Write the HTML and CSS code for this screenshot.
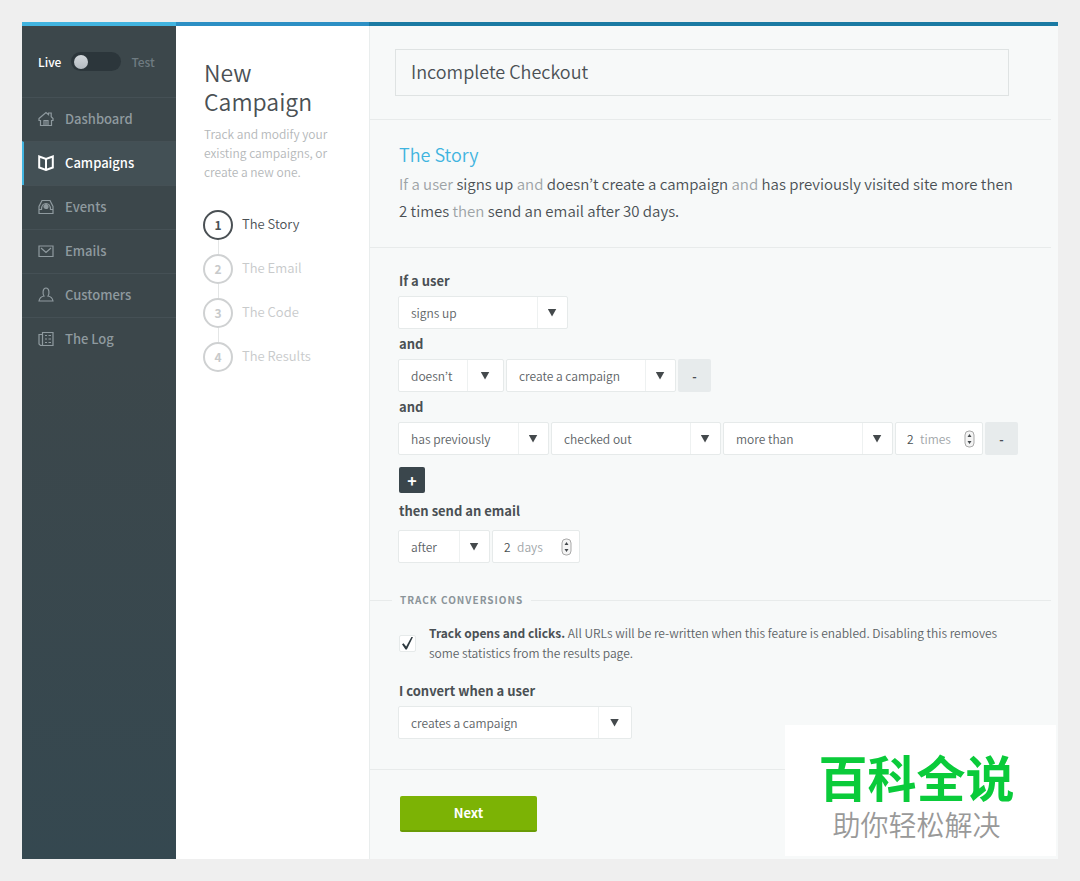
FILE: index.html
```html
<!DOCTYPE html>
<html lang="en">
<head>
    <meta charset="UTF-8">
    <meta name="viewport" content="width=device-width, initial-scale=1.0">
    <title>New Campaign</title>
    <link rel="stylesheet" href="styles.css">
</head>
<body>
    <div class="app">
        <div class="topbar"></div>

        <aside class="sidebar">
            <label class="mode">
                <span class="mode-on">Live</span>
                <input type="checkbox" class="switch" name="test_mode">
                <span class="mode-off">Test</span>
            </label>
            <nav class="nav">
                <a href="#dashboard" class="nav-link">
                    <svg class="icon" viewBox="0 0 16 16"><path d="M1 7.500L8 1.500L10.500 3.600V2H13.200V5.800L15 7.500V9.500H13.500V14.500H2.500V9.500H1ZM6 14.500V9.500H10V14.500M8 9.500V14.500"/></svg>
                    Dashboard
                </a>
                <a href="#campaigns" class="nav-link active">
                    <svg class="icon" viewBox="0 0 16 16"><path d="M1.200 1.500L8 4L14.800 1.500V12.500L8 15L1.200 12.500ZM8 4V15"/></svg>
                    Campaigns
                </a>
                <a href="#events" class="nav-link">
                    <svg class="icon" viewBox="0 0 16 16"><path d="M1 14.500V7.500L4 1.500H12L15 7.500V14.500ZM1 10.500H3.500C3.500 2.500 12.500 2.500 12.500 10.500H15"/><circle cx="8" cy="7.500" r="2" fill="currentColor"/></svg>
                    Events
                </a>
                <a href="#emails" class="nav-link">
                    <svg class="icon" viewBox="0 0 16 16"><path d="M1 3H15V13.500H1ZM3 5L8 9.500L13 5"/></svg>
                    Emails
                </a>
                <a href="#customers" class="nav-link">
                    <svg class="icon" viewBox="0 0 16 16"><path d="M6 9C4.500 7 4.500 1 8 1S11.500 7 10 9C13 9.500 14.500 11 15 14H1C1.500 11 3 9.500 6 9Z"/></svg>
                    Customers
                </a>
                <a href="#log" class="nav-link">
                    <svg class="icon" viewBox="0 0 16 16"><path d="M4.500 1.500H15V14.500H2.500L1 13V3.500H4.500ZM4.500 1.500V14.500M7 4.500H9M10.500 4.500H13M7 8H9M10.500 8H13M7 11.500H9M10.500 11.500H13"/></svg>
                    The Log
                </a>
            </nav>
        </aside>

        <section class="panel">
            <h1>New Campaign</h1>
            <p class="intro">Track and modify your existing campaigns, or create a new one.</p>
            <ol class="steps">
                <li class="step current"><span class="num">1</span>The Story</li>
                <li class="step"><span class="num">2</span>The Email</li>
                <li class="step"><span class="num">3</span>The Code</li>
                <li class="step"><span class="num">4</span>The Results</li>
            </ol>
        </section>

        <main class="main">
            <form action="#">
                <div class="name-row">
                    <input type="text" class="name-input" name="name" value="Incomplete Checkout" aria-label="Campaign name">
                </div>

                <section class="story">
                    <h2>The Story</h2>
                    <p>If a user <b>signs up</b> and <b>doesn’t create a campaign</b> and <b>has previously visited site more then 2 times</b> then <b>send an email after 30 days.</b></p>
                </section>

                <section class="rules">
                    <label class="rule-label" for="event">If a user</label>
                    <div class="row">
                        <span class="select medium"><select id="event"><option>signs up</option></select></span>
                    </div>

                    <label class="rule-label" for="does">and</label>
                    <div class="row">
                        <span class="select small"><select id="does"><option>doesn’t</option></select></span>
                        <span class="select medium"><select aria-label="Action"><option>create a campaign</option></select></span>
                        <button type="button" class="remove" aria-label="Remove condition">-</button>
                    </div>

                    <label class="rule-label" for="has">and</label>
                    <div class="row">
                        <span class="select history"><select id="has"><option>has previously</option></select></span>
                        <span class="select medium"><select aria-label="Action"><option>checked out</option></select></span>
                        <span class="select medium"><select aria-label="Comparison"><option>more than</option></select></span>
                        <label class="number">
                            <input type="number" name="times" value="2">
                            <span>times</span>
                            <svg class="stepper" viewBox="0 0 11 18"><rect x="1" y="1" width="9" height="16" rx="4"/><path d="M3.500 7L5.500 4L7.500 7ZM3.500 11L5.500 14L7.500 11Z"/></svg>
                        </label>
                        <button type="button" class="remove" aria-label="Remove condition">-</button>
                    </div>

                    <button type="button" class="add" aria-label="Add condition">+</button>

                    <label class="rule-label" for="when">then send an email</label>
                    <div class="row send-row">
                        <span class="select when"><select id="when"><option>after</option></select></span>
                        <label class="number">
                            <input type="number" name="days" value="2">
                            <span>days</span>
                            <svg class="stepper" viewBox="0 0 11 18"><rect x="1" y="1" width="9" height="16" rx="4"/><path d="M3.500 7L5.500 4L7.500 7ZM3.500 11L5.500 14L7.500 11Z"/></svg>
                        </label>
                    </div>
                </section>

                <section class="track">
                    <h3>Track Conversions</h3>
                    <div class="track-body">
                        <label class="check">
                            <input type="checkbox" name="track" checked>
                            <span><b>Track opens and clicks.</b> All URLs will be re-written when this feature is enabled. Disabling this removes some statistics from the results page.</span>
                        </label>
                        <label class="rule-label" for="convert">I convert when a user</label>
                        <div class="row">
                            <span class="select large"><select id="convert"><option>creates a campaign</option></select></span>
                        </div>
                    </div>
                </section>

                <div class="actions">
                    <button type="submit" class="next">Next</button>
                </div>
            </form>
        </main>

        <div class="badge" lang="zh">
            <strong>百科全说</strong>
            <span>助你轻松解决</span>
        </div>
    </div>
</body>
</html>
```
FILE: styles.css
```css
* {
    box-sizing: border-box;
}
body {
    margin: 0;
    padding: 22px;
    background: #efefef;
    color: #4a5054;
    font-family: "Noto Sans CJK KR", "Open Sans", sans-serif;
    font-size: 12px;
    font-weight: 350;
}
h1, h2, h3, p, ol {
    margin: 0;
    padding: 0;
    font-weight: 350;
}
input, select, button {
    margin: 0;
    font: inherit;
    color: inherit;
}
.app {
    position: relative;
    display: grid;
    grid-template-columns: 154px 194px 1fr;
    grid-template-rows: 4px 1fr;
    min-height: calc(100vh - 44px);
    background: #f7f9f9;
}
.topbar {
    grid-column: 1 / -1;
    background: linear-gradient(90deg, #41b4e0 154px, #2c8fc4 154px, #2c8fc4 347px, #1a7aa3 347px);
}

/* sidebar */
.sidebar {
    background: linear-gradient(#3c474b 40%, #354850);
}
.mode {
    display: flex;
    align-items: center;
    gap: 10px;
    height: 71px;
    padding-left: 16px;
    font-weight: 500;
}
.mode-on {
    color: #fff;
}
.mode-off {
    color: #6f7b81;
}
.switch {
    appearance: none;
    display: flex;
    align-items: center;
    width: 50px;
    height: 19px;
    padding: 0 3px;
    border-radius: 10px;
    background: #2c363b;
}
.switch::before {
    content: "";
    width: 14px;
    height: 14px;
    border-radius: 50%;
    background: linear-gradient(#d3d8dc, #b4bbc1);
}
.switch:checked {
    justify-content: flex-end;
}
.nav-link {
    display: flex;
    align-items: center;
    gap: 11px;
    height: 44px;
    padding: 0 0 2px 16px;
    border-top: 1px solid #455055;
    color: #8f9a9f;
    font-size: 13px;
    font-weight: 500;
    text-decoration: none;
}
.nav-link.active {
    padding-left: 14px;
    border-left: 2px solid #41b4e0;
    background: #435055;
    color: #fff;
}
.icon {
    width: 16px;
    height: 16px;
    fill: none;
    stroke: currentColor;
    stroke-width: 1.2;
}
.active .icon {
    stroke-width: 2;
}

/* steps panel */
.panel {
    padding: 32px 28px;
    background: #fff;
    border-right: 1px solid #e9eded;
}
.panel h1 {
    font-size: 23px;
    line-height: 29px;
}
.intro {
    margin-top: 8px;
    color: #b4b7b9;
    line-height: 19px;
}
.steps {
    margin: 29px 0 0 -1px;
    list-style: none;
}
.step {
    display: grid;
    grid-template-columns: 30px 1fr;
    column-gap: 9px;
    color: #c8cacb;
    font-size: 13px;
    line-height: 28px;
}
.step:not(:last-child)::after {
    content: "";
    justify-self: center;
    width: 1px;
    height: 14px;
    background: #e4e6e6;
}
.num {
    height: 30px;
    border: 2px solid #cfd1d2;
    border-radius: 50%;
    font-size: 12px;
    font-weight: 700;
    line-height: 26px;
    text-align: center;
}
.step.current {
    color: #4a5054;
}
.current .num {
    border-color: #4a5054;
}

/* form */
.name-row, .story, .rules, .track {
    margin-right: 7px;
}
.name-row {
    padding: 23px 42px 23px 25px;
    border-bottom: 1px solid #e8ebeb;
}
.name-input {
    display: block;
    width: 100%;
    height: 47px;
    padding: 0 15px 4px;
    border: 1px solid #dfe3e3;
    background: none;
    font-size: 18px;
}
.story {
    padding: 20px 36px 23px 29px;
    border-bottom: 1px solid #e8ebeb;
    color: #9da3a6;
}
.story h2 {
    margin-bottom: 2px;
    color: #3fb4df;
    font-size: 18px;
    line-height: 28px;
}
.story p {
    font-size: 15px;
    line-height: 27px;
}
.story b {
    color: #4a5054;
    font-weight: 350;
}
.rules {
    padding: 18px 0 27px 29px;
}
.rule-label {
    display: block;
    font-size: 13px;
    font-weight: 700;
    line-height: 30px;
}
.row {
    display: flex;
    gap: 2px;
    margin-left: -1px;
}
.select {
    display: grid;
    grid-template-columns: 1fr 30px;
    height: 33px;
    border: 1px solid #e6eaea;
    border-radius: 2px;
    background: #fff;
}
.select select {
    grid-area: 1 / 1 / 2 / 3;
    appearance: none;
    padding: 0 12px;
    border: none;
    background: none;
    color: #5c6265;
}
.select::before {
    content: "";
    grid-area: 1 / 2;
    border-left: 1px solid #eef1f1;
    pointer-events: none;
}
.select::after {
    content: "";
    grid-area: 1 / 2;
    place-self: center;
    width: 9px;
    height: 8px;
    background: #44494c;
    clip-path: polygon(0 0, 100% 0, 50% 100%);
    pointer-events: none;
}
.small {
    width: 106px;
    grid-template-columns: 1fr 36px;
}
.medium {
    width: 170px;
}
.history {
    width: 151px;
}
.when {
    width: 92px;
}
.large {
    width: 234px;
    grid-template-columns: 1fr 33px;
}
.number {
    display: flex;
    align-items: center;
    gap: 5px;
    width: 88px;
    height: 33px;
    padding: 0 7px 0 11px;
    border: 1px solid #e6eaea;
    border-radius: 2px;
    background: #fff;
    color: #a0a5a8;
}
.number input {
    appearance: textfield;
    width: 8px;
    padding: 0;
    border: none;
    background: none;
    color: #4a5054;
}
.number input::-webkit-inner-spin-button {
    display: none;
}
.stepper {
    width: 11px;
    height: 18px;
    margin-left: auto;
    fill: #f4f4f4;
    stroke: #a9a9a9;
}
.stepper path {
    fill: #44494c;
    stroke: none;
}
.remove {
    width: 33px;
    height: 33px;
    padding: 0;
    border: none;
    border-radius: 2px;
    background: #e7ebec;
    font-weight: 700;
}
.add {
    display: block;
    width: 26px;
    height: 26px;
    margin: 12px 0 3px;
    padding: 0;
    border: none;
    border-radius: 2px;
    background: #3a464c;
    color: #fff;
    font-size: 16px;
    font-weight: 700;
    line-height: 24px;
}
.send-row {
    margin-top: 4px;
}
.track {
    padding-bottom: 30px;
    border-bottom: 1px solid #e8ebeb;
}
.track h3 {
    display: flex;
    align-items: center;
    gap: 8px;
    color: #8b9499;
    font-size: 10px;
    font-weight: 700;
    letter-spacing: 1px;
    line-height: 20px;
    text-transform: uppercase;
}
.track h3::before, .track h3::after {
    content: "";
    width: 22px;
    height: 1px;
    background: #e8ebeb;
}
.track h3::after {
    flex: 1;
}
.track-body {
    padding: 13px 40px 0 29px;
}
.check {
    display: flex;
    align-items: center;
    gap: 13px;
    margin-bottom: 13px;
    color: #5c6265;
    line-height: 20px;
}
.check b {
    color: #4a5054;
}
.check input {
    appearance: none;
    flex: none;
    width: 17px;
    height: 17px;
    border: 1px solid #e6eaea;
    border-radius: 2px;
    background: #fff;
}
.check input:checked::before {
    content: "";
    display: block;
    width: 11px;
    height: 13px;
    margin: 1px 2px;
    background: #2f3b41;
    clip-path: polygon(0 60%, 14% 52%, 38% 76%, 88% 0, 100% 4%, 44% 100%, 32% 100%);
}
.actions {
    padding: 26px 30px;
}
.next {
    width: 137px;
    height: 36px;
    padding: 0 0 2px;
    border: none;
    border-bottom: 2px solid #699b06;
    border-radius: 2px;
    background: #7cb305;
    color: #fff;
    font-size: 13px;
    font-weight: 700;
}

/* floating badge */
.badge {
    position: absolute;
    right: 2px;
    bottom: 3px;
    display: flex;
    flex-direction: column;
    align-items: center;
    width: 271px;
    height: 131px;
    padding: 23px 8px 0 0;
    background: #fff;
    font-family: "Noto Sans CJK SC", sans-serif;
}
.badge strong {
    color: #0acb3a;
    font-size: 49px;
    font-weight: 700;
    line-height: 56px;
}
.badge span {
    color: #999;
    font-size: 28px;
    line-height: 40px;
}
```
